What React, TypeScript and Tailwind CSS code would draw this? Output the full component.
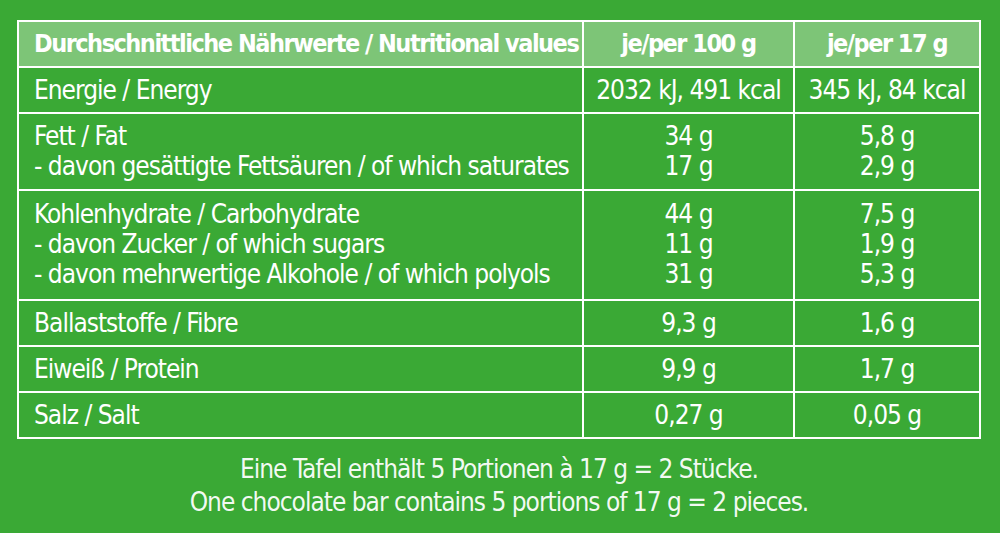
import React from 'react';

type Row = { labels: string[]; per100: string[]; per17: string[]; pad: string };

const rows: Row[] = [
  { labels: ['Energie / Energy'], per100: ['2032 kJ, 491 kcal'], per17: ['345 kJ, 84 kcal'], pad: 'py-[7px]' },
  {
    labels: ['Fett / Fat', '- davon gesättigte Fettsäuren / of which saturates'],
    per100: ['34 g', '17 g'],
    per17: ['5,8 g', '2,9 g'],
    pad: 'pt-[7px] pb-[8px]',
  },
  {
    labels: [
      'Kohlenhydrate / Carbohydrate',
      '- davon Zucker / of which sugars',
      '- davon mehrwertige Alkohole / of which polyols',
    ],
    per100: ['44 g', '11 g', '31 g'],
    per17: ['7,5 g', '1,9 g', '5,3 g'],
    pad: 'pt-[8px] pb-[10px]',
  },
  { labels: ['Ballaststoffe / Fibre'], per100: ['9,3 g'], per17: ['1,6 g'], pad: 'py-[7px]' },
  { labels: ['Eiweiß / Protein'], per100: ['9,9 g'], per17: ['1,7 g'], pad: 'py-[7px]' },
  { labels: ['Salz / Salt'], per100: ['0,27 g'], per17: ['0,05 g'], pad: 'py-[7px]' },
];

const font = "font-['DejaVu_Sans_Condensed','DejaVu_Sans',sans-serif]";

const App: React.FC = () => {
  return (
    <div className={`w-[1000px] h-[533px] bg-[#3aa935] text-white ${font} pt-[20px] pl-[17px]`}>
      <div className="w-[964px] border-2 border-white whitespace-nowrap">
        <div className="grid grid-cols-[563px_211px_1fr] bg-[#7dc577] text-[25px] font-bold leading-[30px] tracking-[-1.5px]">
          <div className="pl-[15px] py-[7px]">Durchschnittliche Nährwerte / Nutritional values</div>
          <div className="border-l-2 border-white py-[7px] text-center">je/per 100 g</div>
          <div className="border-l-2 border-white py-[7px] text-center">je/per 17 g</div>
        </div>
        {rows.map((row) => (
          <div
            key={row.labels[0]}
            className="grid grid-cols-[563px_211px_1fr] border-t-2 border-white text-[26px] leading-[30px] tracking-[-1px]"
          >
            <div className={`pl-[15px] ${row.pad}`}>
              {row.labels.map((l) => (
                <div key={l}>{l}</div>
              ))}
            </div>
            <div className={`border-l-2 border-white text-center ${row.pad}`}>
              {row.per100.map((v, i) => (
                <div key={i}>{v}</div>
              ))}
            </div>
            <div className={`border-l-2 border-white text-center ${row.pad}`}>
              {row.per17.map((v, i) => (
                <div key={i}>{v}</div>
              ))}
            </div>
          </div>
        ))}
      </div>
      <div className="w-[964px] pt-[14px] text-center text-[26px] leading-[33px] tracking-[-1px] text-white/95">
        <div>Eine Tafel enthält 5 Portionen à 17 g = 2 Stücke.</div>
        <div>One chocolate bar contains 5 portions of 17 g = 2 pieces.</div>
      </div>
    </div>
  );
};

export default App;
